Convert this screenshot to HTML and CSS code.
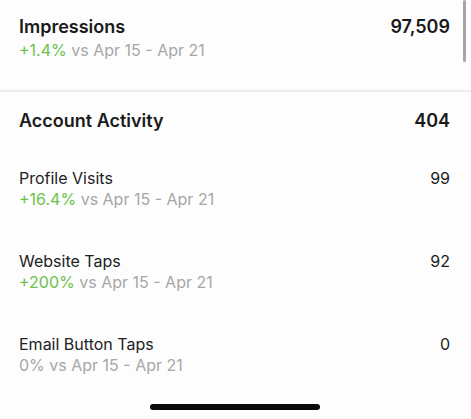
FILE: index.html
```html
<!DOCTYPE html>
<html>
<head>
<meta charset="utf-8">
<link rel="stylesheet" href="styles.css">
</head>
<body>
<div class="screen">
  <section class="block top">
    <div class="row">
      <div class="info">
        <div class="title">Impressions</div>
        <div class="sub"><span class="up">+1.4%</span> vs Apr 15 - Apr 21</div>
      </div>
      <div class="value strong">97,509</div>
    </div>
  </section>
  <div class="divider"></div>
  <section class="block activity">
    <div class="row head">
      <div class="title">Account Activity</div>
      <div class="value strong">404</div>
    </div>
    <div class="row item">
      <div class="info">
        <div class="label">Profile Visits</div>
        <div class="sub"><span class="up">+16.4%</span> vs Apr 15 - Apr 21</div>
      </div>
      <div class="value">99</div>
    </div>
    <div class="row item">
      <div class="info">
        <div class="label">Website Taps</div>
        <div class="sub"><span class="up">+200%</span> vs Apr 15 - Apr 21</div>
      </div>
      <div class="value">92</div>
    </div>
    <div class="row item">
      <div class="info">
        <div class="label">Email Button Taps</div>
        <div class="sub">0% vs Apr 15 - Apr 21</div>
      </div>
      <div class="value">0</div>
    </div>
  </section>
  <div class="scrollbar"></div>
  <div class="home"></div>
</div>
</body>
</html>
```
FILE: styles.css
```css
html, body {
  margin: 0;
  padding: 0;
  background: #fdfdfd;
}
.screen {
  position: relative;
  width: 471px;
  height: 419px;
  overflow: hidden;
  font-family: Inter, "Noto Sans", sans-serif;
  color: #1a1a1a;
}
.block {
  padding: 0 21px 0 19px;
}
.top {
  padding-top: 16px;
  height: 78px;
  box-sizing: border-box;
}
.row {
  display: flex;
  justify-content: space-between;
  align-items: flex-start;
}
.title {
  font-size: 18px;
  line-height: 22px;
  font-weight: 600;
}
.value {
  font-size: 16px;
  line-height: 20px;
}
.value.strong {
  font-size: 18px;
  line-height: 22px;
  font-weight: 600;
}
.label {
  font-size: 16px;
  line-height: 20px;
  color: #222;
}
.sub {
  font-size: 16px;
  line-height: 22px;
  color: #a7a7a7;
}
.top .sub {
  margin-top: 1px;
}
.up {
  color: #6cc24a;
}
.divider {
  height: 2px;
  background: #ececec;
  margin-top: 12px;
}
.activity {
  padding-top: 18px;
}
.head {
  margin-bottom: 36px;
}
.item {
  height: 83px;
}
.scrollbar {
  position: absolute;
  left: 463px;
  top: 0;
  width: 3px;
  height: 62px;
  border-radius: 2px;
  background: #a6a6a6;
}
.home {
  position: absolute;
  left: 150px;
  top: 404px;
  width: 170px;
  height: 6px;
  border-radius: 3px;
  background: #0a0a0a;
}
```
